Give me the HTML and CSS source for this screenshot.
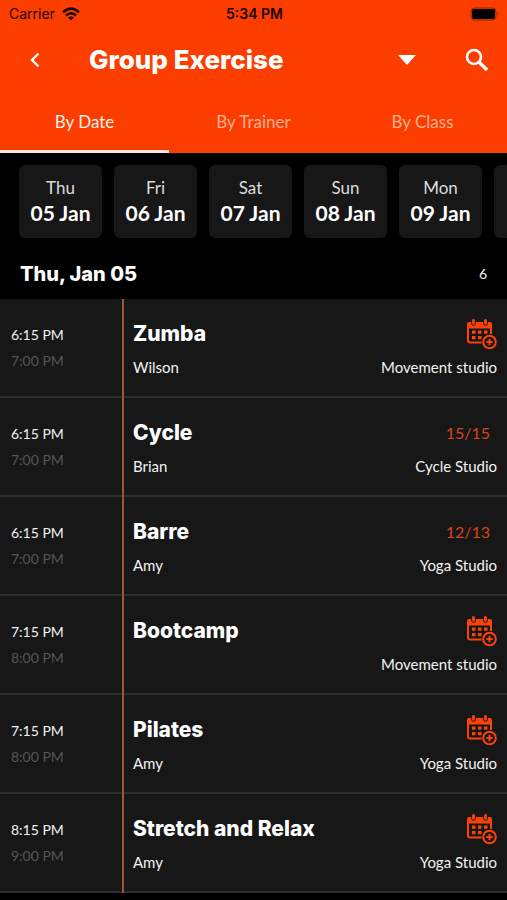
FILE: index.html
```html
<!DOCTYPE html>
<html lang="en">
<head>
<meta charset="utf-8">
<meta name="viewport" content="width=device-width, initial-scale=1">
<title>Group Exercise</title>
<link rel="stylesheet" href="styles.css">
</head>
<body>
<svg class="defs" aria-hidden="true">
  <symbol id="calendar-add" viewBox="0 0 30 31">
    <path d="M1 8V21.500Q1 23.500 3 23.500H16M24 8V15" fill="none" stroke="currentColor" stroke-width="2"/>
    <path d="M0 5Q0 3 2 3H23Q25 3 25 5V9.500H0Z" fill="currentColor"/>
    <path d="M6.500 1V4.500M18.500 1V4.500" stroke="#171717" stroke-width="4.600" stroke-linecap="round"/>
    <path d="M6.500 1.500V4.500M18.500 1.500V4.500" stroke="currentColor" stroke-width="2.800" stroke-linecap="round"/>
    <path d="M5 11.500h3.500v3.300h-3.500zM11 11.500h3.500v3.300h-3.500zM17 11.500h3.500v3.300h-3.500zM5 17h3.500v3.300h-3.500zM11 17h3.500v3.300h-3.500z" fill="currentColor"/>
    <circle cx="22.500" cy="23" r="8" fill="#171717"/>
    <circle cx="22.500" cy="23" r="6.300" fill="none" stroke="currentColor" stroke-width="2"/>
    <path d="M22.500 19.800V26.200M19.300 23H25.700" stroke="currentColor" stroke-width="2"/>
  </symbol>
</svg>
<header class="top">
  <div class="status">
    <span class="carrier">Carrier
      <svg class="wifi" viewBox="0 0 18 14" aria-hidden="true"><g fill="none" stroke="currentColor" stroke-width="2.600"><path d="M1 5.200Q9-2 17 5.200"/><path d="M4 8.500Q9 4 14 8.500"/></g><path d="M9 13.500L6 10.600Q9 8.300 12 10.600Z" fill="currentColor"/></svg>
    </span>
    <span class="clock">5:34 PM</span>
    <svg class="battery" viewBox="0 0 30 14" aria-hidden="true"><rect x="1" y="1" width="25" height="12" rx="3.500" fill="none" stroke="#000" stroke-opacity=".4"/><rect x="2" y="2" width="23" height="10" rx="2"/><path d="M27.500 5q2 2 0 4z" fill-opacity=".4"/></svg>
  </div>
  <div class="bar">
    <button class="icon-btn" aria-label="Back"><svg width="12" height="16" viewBox="0 0 12 16"><path d="M9.500 1.500L3 8L9.500 14.500" fill="none" stroke="currentColor" stroke-width="2.400"/></svg></button>
    <h1>Group Exercise</h1>
    <button class="icon-btn drop" aria-label="Choose schedule"><svg width="20" height="10" viewBox="0 0 20 10"><path d="M1 0H19L10 10Z" fill="currentColor"/></svg></button>
    <button class="icon-btn" aria-label="Search"><svg width="24" height="24" viewBox="0 0 24 24"><circle cx="9" cy="9" r="7" fill="none" stroke="currentColor" stroke-width="2.600"/><path d="M14 14L22 22" stroke="currentColor" stroke-width="3.400"/></svg></button>
  </div>
  <nav class="tabs">
    <a class="active" href="#date">By Date</a>
    <a href="#trainer">By Trainer</a>
    <a href="#class">By Class</a>
  </nav>
</header>
<main>
  <div class="days">
    <button><span>Thu</span><b>05 Jan</b></button>
    <button><span>Fri</span><b>06 Jan</b></button>
    <button><span>Sat</span><b>07 Jan</b></button>
    <button><span>Sun</span><b>08 Jan</b></button>
    <button><span>Mon</span><b>09 Jan</b></button>
    <button aria-label="Tue 10 Jan"></button>
  </div>
  <div class="day-head"><h2>Thu, Jan 05</h2><span>6</span></div>
  <ul class="classes">
    <li>
      <div class="time"><span>6:15 PM</span><span class="end">7:00 PM</span></div>
      <div class="info">
        <div class="line"><h3>Zumba</h3><button class="add" aria-label="Add Zumba"><svg><use href="#calendar-add"/></svg></button></div>
        <div class="line meta"><span>Wilson</span><span>Movement studio</span></div>
      </div>
    </li>
    <li>
      <div class="time"><span>6:15 PM</span><span class="end">7:00 PM</span></div>
      <div class="info">
        <div class="line"><h3>Cycle</h3><span class="spots">15/15</span></div>
        <div class="line meta"><span>Brian</span><span>Cycle Studio</span></div>
      </div>
    </li>
    <li>
      <div class="time"><span>6:15 PM</span><span class="end">7:00 PM</span></div>
      <div class="info">
        <div class="line"><h3>Barre</h3><span class="spots">12/13</span></div>
        <div class="line meta"><span>Amy</span><span>Yoga Studio</span></div>
      </div>
    </li>
    <li>
      <div class="time"><span>7:15 PM</span><span class="end">8:00 PM</span></div>
      <div class="info">
        <div class="line"><h3>Bootcamp</h3><button class="add" aria-label="Add Bootcamp"><svg><use href="#calendar-add"/></svg></button></div>
        <div class="line meta"><span></span><span>Movement studio</span></div>
      </div>
    </li>
    <li>
      <div class="time"><span>7:15 PM</span><span class="end">8:00 PM</span></div>
      <div class="info">
        <div class="line"><h3>Pilates</h3><button class="add" aria-label="Add Pilates"><svg><use href="#calendar-add"/></svg></button></div>
        <div class="line meta"><span>Amy</span><span>Yoga Studio</span></div>
      </div>
    </li>
    <li>
      <div class="time"><span>8:15 PM</span><span class="end">9:00 PM</span></div>
      <div class="info">
        <div class="line"><h3>Stretch and Relax</h3><button class="add" aria-label="Add Stretch and Relax"><svg><use href="#calendar-add"/></svg></button></div>
        <div class="line meta"><span>Amy</span><span>Yoga Studio</span></div>
      </div>
    </li>
  </ul>
</main>
</body>
</html>
```
FILE: styles.css
```css
* { box-sizing: border-box; }
body { margin: 0; background: #000; color: #f2f2f2; font-family: Lato, "Liberation Sans", sans-serif; overflow-x: hidden; }
h1, h2, h3 { margin: 0; color: #fff; font-family: Inter, "Open Sans", sans-serif; font-weight: 800; }
button { padding: 0; border: 0; background: none; color: inherit; font: inherit; cursor: pointer; }
svg { display: block; }
.defs { display: none; }

.top { background: #fb3d00; color: #fff; }
.status { display: grid; grid-template-columns: 1fr auto 1fr; align-items: center; height: 28px; padding: 0 7px 0 9px; color: #1c0700; font: 14px/20px Inter, sans-serif; }
.carrier { display: flex; align-items: center; gap: 7px; }
.wifi { width: 18px; height: 14px; }
.clock { font-weight: 600; }
.battery { width: 30px; height: 14px; justify-self: end; }

.bar { display: flex; align-items: center; height: 64px; padding: 0 10px 0 15px; }
.icon-btn { display: grid; place-items: center; width: 40px; height: 40px; }
.bar h1 { flex: 1; margin-left: 34px; font-size: 26px; line-height: 32px; }
.drop { margin-right: 30px; }

.tabs { display: grid; grid-template-columns: repeat(3, 1fr); }
.tabs a { height: 61px; padding-top: 18px; border-bottom: 3px solid transparent; color: #ffb092; font-size: 17px; line-height: 24px; text-align: center; text-decoration: none; }
.tabs .active { color: #fff0ea; border-color: #ffe5dc; }

.days { display: flex; gap: 12px; padding: 12px 0 11px 19px; overflow: hidden; }
.days button { flex: none; display: flex; flex-direction: column; align-items: center; width: 83px; height: 73px; padding-top: 11px; border-radius: 6px; background: #171717; }
.days span { font-size: 17px; line-height: 24px; color: #ddd; }
.days b { font-size: 21px; line-height: 26px; color: #fff; }

.day-head { display: flex; align-items: center; justify-content: space-between; height: 50px; padding: 0 20px; }
.day-head h2 { font-size: 20px; line-height: 24px; }
.day-head span { font-size: 14px; line-height: 20px; }

.classes { margin: 0; padding: 0; list-style: none; }
.classes li { display: flex; height: 99px; background: linear-gradient(#2d2d2d, #2d2d2d) bottom / 100% 2px no-repeat #171717; }
.time { display: flex; flex-direction: column; width: 124px; padding: 23px 0 0 11px; border-right: 2px solid #a0562e; font-size: 14px; line-height: 26px; }
.end { color: #555; }
.info { flex: 1; padding: 17px 10px 0 9px; font-size: 15px; }
.line { display: flex; align-items: center; justify-content: space-between; height: 36px; }
.line h3 { font-size: 21px; line-height: 28px; }
.meta { height: 30px; }
.add, .add svg { width: 30px; height: 31px; color: #fb4308; }
.spots { margin-right: 7px; color: #d9441a; font-size: 16px; line-height: 24px; }
```
